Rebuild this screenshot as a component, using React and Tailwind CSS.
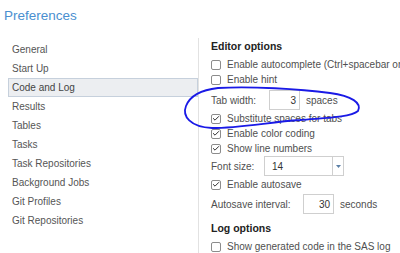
import { Check } from 'lucide-react'

const navItems = [
  'General',
  'Start Up',
  'Code and Log',
  'Results',
  'Tables',
  'Tasks',
  'Task Repositories',
  'Background Jobs',
  'Git Profiles',
  'Git Repositories',
]

function Checkbox({ checked, label, className = '' }) {
  return (
    <div className={`flex h-[15px] items-center gap-[6px] ${className}`}>
      <span className="flex h-[10px] w-[10px] shrink-0 items-center justify-center rounded-[2px] border border-[#8c8c8c] bg-white">
        {checked ? <Check className="h-[9px] w-[9px] text-[#333]" strokeWidth={3} /> : null}
      </span>
      <span className="whitespace-nowrap">{label}</span>
    </div>
  )
}

function NumberField({ label, labelWidth, value, unit, className = '' }) {
  return (
    <div className={`flex h-[20px] items-center ${className}`}>
      <span className={`shrink-0 ${labelWidth}`}>{label}</span>
      <span className="flex h-[20px] w-[31px] items-center justify-end border border-[#cfcfcf] pr-[3px] text-[#333]">
        {value}
      </span>
      <span className="ml-[6px]">{unit}</span>
    </div>
  )
}

export default function App() {
  return (
    <div className="relative h-[253px] w-[400px] overflow-hidden bg-white font-['Liberation_Sans',Arial,sans-serif] text-[10px] text-[#555]">
      <div className="flex h-[38px] items-start pl-[4px] pt-[6px] text-[13.5px] text-[#4a8fd0]">
        Preferences
      </div>

      <div className="flex h-[215px]">
        <ul className="w-[198px] shrink-0 pl-[8px] pt-[2px]">
          {navItems.map((item) => (
            <li
              key={item}
              className={
                item === 'Code and Log'
                  ? 'flex h-[19px] items-center border border-[#c6d0dc] bg-[#eceef1] pl-[3px] text-[#444]'
                  : 'flex h-[19px] items-center pl-[4px]'
              }
            >
              {item}
            </li>
          ))}
        </ul>

        <div className="min-w-0 flex-1 overflow-hidden border-l border-[#e2e2e2] pl-[12px] pt-[2px] text-[#4f4f4f]">
          <div className="flex h-[14px] items-center text-[10.5px] font-bold text-[#222]">Editor options</div>
          <Checkbox className="mt-[3px]" label="Enable autocomplete (Ctrl+spacebar on)" />
          <Checkbox label="Enable hint" />
          <NumberField className="mt-[3px]" label="Tab width:" labelWidth="w-[58px]" value="3" unit="spaces" />
          <Checkbox className="mt-[1px]" checked label="Substitute spaces for tabs" />
          <Checkbox checked label="Enable color coding" />
          <Checkbox checked label="Show line numbers" />
          <div className="flex h-[20px] items-center">
            <span className="w-[53px] shrink-0">Font size:</span>
            <div className="flex h-[20px] w-[80px] items-center border border-[#cfcfcf]">
              <span className="flex-1 pl-[7px] text-[#333]">14</span>
              <span className="flex h-full w-[11px] items-center justify-center border-l border-[#cfcfcf]">
                <svg width="5" height="3" viewBox="0 0 5 3">
                  <path d="M0 0h5L2.5 3z" fill="#5b7fa6" />
                </svg>
              </span>
            </div>
          </div>
          <Checkbox className="mt-[1px]" checked label="Enable autosave" />
          <NumberField
            className="mt-[2px]"
            label="Autosave interval:"
            labelWidth="w-[92px]"
            value="30"
            unit="seconds"
          />
          <div className="mt-[8px] flex h-[14px] items-center text-[10.5px] font-bold text-[#222]">Log options</div>
          <Checkbox className="mt-[3px]" label="Show generated code in the SAS log" />
        </div>
      </div>

      <svg className="pointer-events-none absolute left-0 top-0" width="400" height="253" viewBox="0 0 400 253">
        <path
          d="M218 88 C250 86 300 89 330 93 C352 96 362 103 358 111 C350 118 320 118 300 120 C270 122 240 128 212 128 C190 127 182 116 186 106 C190 96 200 90 218 88 Z"
          fill="none"
          stroke="#1a1ae6"
          strokeWidth="1.8"
          strokeLinecap="round"
        />
      </svg>
    </div>
  )
}
